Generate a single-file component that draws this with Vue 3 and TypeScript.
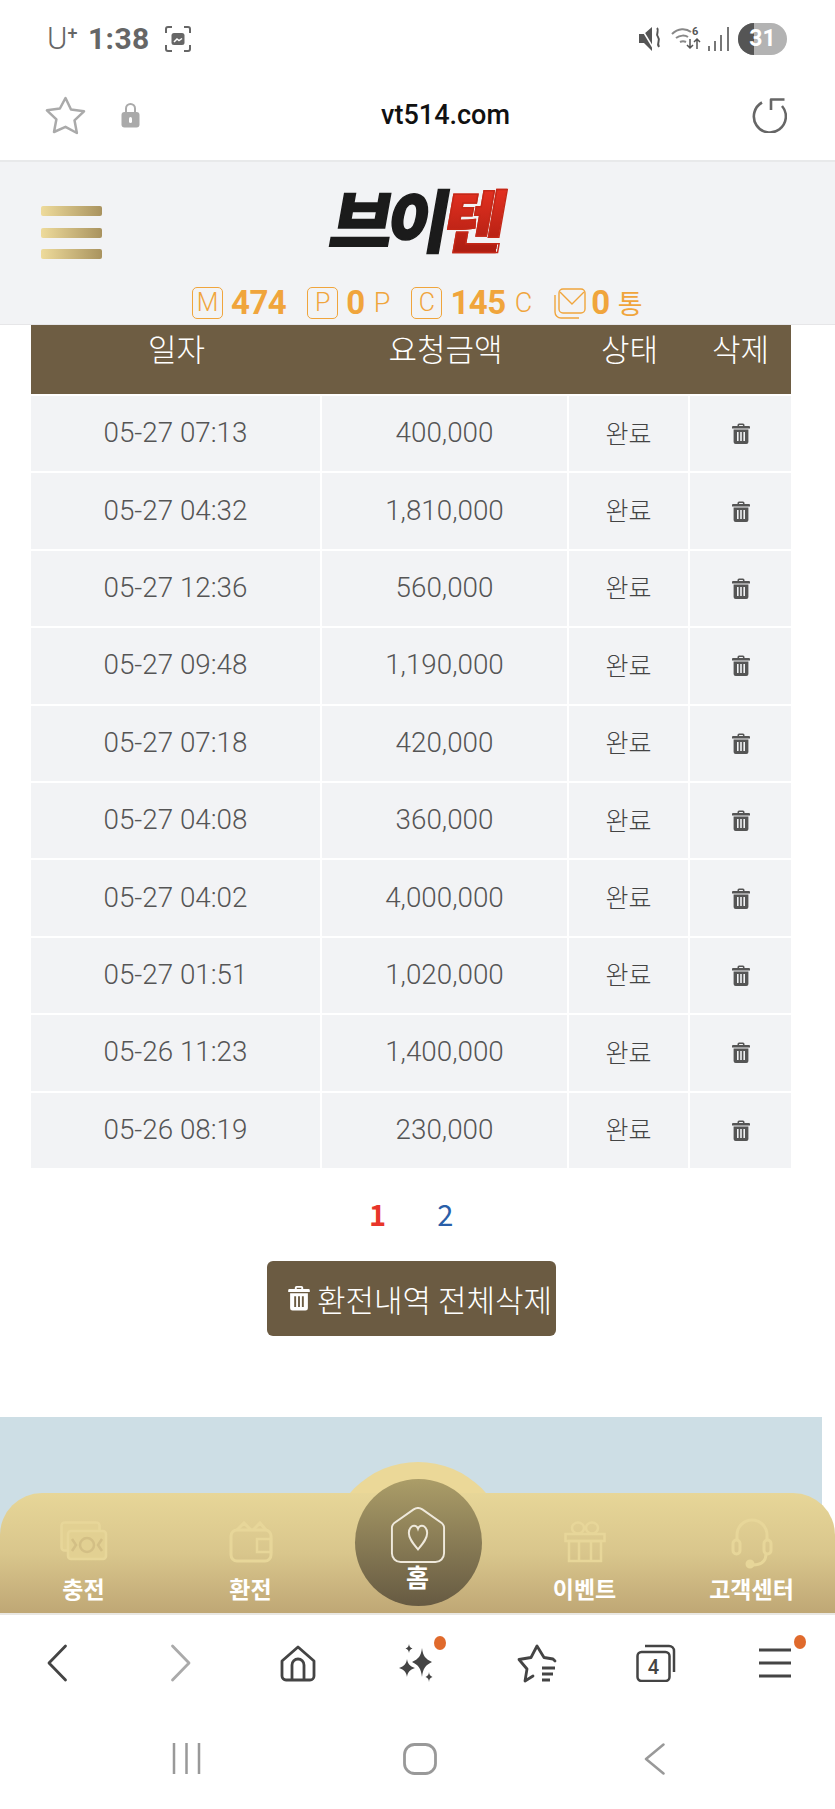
<script setup lang="ts">
const rows: [string, string][] = [
  ['05-27 07:13', '400,000'],
  ['05-27 04:32', '1,810,000'],
  ['05-27 12:36', '560,000'],
  ['05-27 09:48', '1,190,000'],
  ['05-27 07:18', '420,000'],
  ['05-27 04:08', '360,000'],
  ['05-27 04:02', '4,000,000'],
  ['05-27 01:51', '1,020,000'],
  ['05-26 11:23', '1,400,000'],
  ['05-26 08:19', '230,000'],
]
const trash = 'M8 1.5h4a1.5 1.5 0 0 1 1.5 1.5v1H18a1 1 0 0 1 1 1v1.4H1V5a1 1 0 0 1 1-1h4.5V3A1.5 1.5 0 0 1 8 1.5zM8.1 3v1h3.8V3zM2.6 7.6h14.8V20a2 2 0 0 1-2 2H4.6a2 2 0 0 1-2-2zM6 10v9h1.6v-9zm3.2 0v9h1.6v-9zm3.2 0v9H14v-9z'
</script>

<template>
  <div class="page">
    <div class="status">
      <div class="status-left">
        <span class="carrier">U<sup>+</sup></span>
        <span class="clock">1:38</span>
        <svg class="shot" width="28" height="28" viewBox="0 0 28 28" fill="none" stroke="#666" stroke-width="2">
          <path d="M2 8V4a2 2 0 0 1 2-2h4M20 2h4a2 2 0 0 1 2 2v4M26 20v4a2 2 0 0 1-2 2h-4M8 26H4a2 2 0 0 1-2-2v-4" />
          <rect x="7.5" y="8" width="13" height="12" rx="2.5" fill="#666" stroke="none" />
          <path d="M10 17l3-3 2 1.500 3-2" stroke="#fff" stroke-width="1.500" />
        </svg>
      </div>
      <div class="status-right">
        <svg class="mute" width="26" height="28" viewBox="0 0 26 28">
          <path d="M1 9h5l8-7v24l-8-8H1z" fill="#555" />
          <path d="M2 1l15 25" stroke="#fff" stroke-width="1.500" />
          <path d="M19 3c3 3-2 5 1 9s-2 5 1 10" fill="none" stroke="#555" stroke-width="2" />
        </svg>
        <svg width="30" height="28" viewBox="0 0 30 28" fill="none" stroke="#888" stroke-width="2">
          <path d="M1 9c6-6 14-6 19-2M5 13c4-3 9-3 12-1M9 17c2-1 4-1 6 0" />
          <text x="21" y="10" class="wifi-six">6</text>
          <path d="M19 14v9m-3-3l3 3 3-3M26 24v-10m-3 3l3-3 3 3" stroke="#555" stroke-width="1.500" />
        </svg>
        <svg width="24" height="26" viewBox="0 0 24 26" fill="#777">
          <rect x="1" y="20" width="2" height="5" />
          <rect x="7" y="15" width="2" height="10" />
          <rect x="13" y="9" width="2" height="16" />
          <rect x="20" y="1" width="2" height="24" />
        </svg>
        <div class="battery"><span class="battery-fill"></span><span class="battery-num">31</span></div>
      </div>
    </div>

    <div class="urlbar">
      <div class="url-left">
        <svg width="41" height="39" viewBox="0 0 41 39" fill="none" stroke="#aaa" stroke-width="2.500" stroke-linejoin="round">
          <path d="M20.500 2l5.500 11.500 13 1.800-9.500 9 2.400 12.700-11.400-6.200L9 36l2.400-12.700-9.500-9 13-1.800z" />
        </svg>
        <svg width="19" height="26" viewBox="0 0 19 26" fill="#aaa">
          <path d="M5 11V6.500a4.500 4.500 0 0 1 9 0V11" fill="none" stroke="#aaa" stroke-width="2" />
          <rect x="0.500" y="10" width="18" height="15.500" rx="3" />
          <rect x="8" y="15" width="3" height="6" rx="1.500" fill="#fff" />
        </svg>
      </div>
      <div class="url">vt514.com</div>
      <svg class="reload" width="36" height="36" viewBox="0 0 36 36" fill="none" stroke="#666" stroke-width="2.600">
        <path d="M11 5.500A16 16 0 1 0 31 9" />
        <path d="M20 13V2.500h13.500" stroke-linejoin="round" stroke-width="2.600" />
      </svg>
    </div>

    <header class="site-header">
      <div class="burger"><i></i><i></i><i></i></div>
      <div class="logo"><span class="logo-black">브이</span><span class="logo-red">텐</span></div>
      <div class="wallet">
        <span class="tag">M</span><b class="w-474">474</b>
        <span class="tag tag-p">P</span><b>0</b><span class="unit">P</span>
        <span class="tag tag-c">C</span><b>145</b><span class="unit">C</span>
        <svg class="mail" width="33" height="31" viewBox="0 0 33 31" fill="none" stroke="#f0a53c" stroke-width="1.400">
          <rect x="6" y="1" width="26" height="24" rx="4" />
          <path d="M7 4l12 12L31 4" />
          <path d="M2 7v17a6 6 0 0 0 6 6h18" />
        </svg>
        <b>0</b><span class="unit unit-kr">통</span>
      </div>
    </header>

    <main class="main">
      <section class="table">
        <div class="thead">
          <span>일자</span><span>요청금액</span><span>상태</span><span>삭제</span>
        </div>
        <div v-for="row in rows" :key="row[0]" class="trow">
          <span class="cell">{{ row[0] }}</span>
          <span class="cell">{{ row[1] }}</span>
          <span class="cell cell-kr">완료</span>
          <span class="cell cell-icon">
            <svg width="20" height="23" viewBox="0 0 20 23" fill="#555"><path fill-rule="evenodd" :d="trash" /></svg>
          </span>
        </div>
      </section>

      <nav class="pager"><span class="p-on">1</span><span class="p-off">2</span></nav>

      <button class="clear" type="button">
        <svg width="24" height="28" viewBox="0 0 20 23" fill="#fff"><path fill-rule="evenodd" :d="trash" /></svg>
        <span>환전내역 전체삭제</span>
      </button>

      <div class="banner"></div>

      <div class="goldnav">
        <div class="bump"></div>
        <div class="panel"></div>
        <div class="circle"></div>
        <div class="nav-items">
          <a class="nav-item">
            <svg width="48" height="40" viewBox="0 0 48 40" fill="none" stroke="#e7d699" stroke-width="2.500">
              <rect x="1.500" y="1.500" width="38" height="28" rx="3" fill="#e2d092" />
              <rect x="8" y="10" width="38" height="28" rx="3" fill="#e2d092" />
              <circle cx="27" cy="24" r="7" stroke="#d3bf85" />
              <path d="M12 18l4 6-4 6M42 18l-4 6 4 6" stroke="#d3bf85" />
            </svg>
            <span>충전</span>
          </a>
          <a class="nav-item">
            <svg width="44" height="42" viewBox="0 0 44 42" fill="none" stroke="#e7d699" stroke-width="3">
              <rect x="2" y="9" width="40" height="31" rx="6" />
              <path d="M8 9l7-7 7 7M24 9l7-7 6 7" />
              <rect x="28" y="18" width="14" height="13" stroke-width="2.500" />
            </svg>
            <span>환전</span>
          </a>
          <a class="nav-item nav-home">
            <svg width="58" height="56" viewBox="0 0 58 58" fill="none" stroke="#efe9dc" stroke-width="2">
              <path d="M2 21c0-2 1-3 2.500-4.500L24.500 2.500c3-2 6-2 9 0l20 14c1.500 1.500 2.500 2.500 2.500 4.500v27a9 9 0 0 1-9 9H11a9 9 0 0 1-9-9z" />
              <path d="M29 44c-5-6-9.500-11-9.500-17 0-5 3-7.500 5.500-7.500 2 0 3.300 1 4 3 .7-2 2-3 4-3 2.500 0 5.500 2.500 5.500 7.500 0 6-4.500 11-9.500 17z" />
            </svg>
            <span>홈</span>
          </a>
          <a class="nav-item">
            <svg width="42" height="42" viewBox="0 0 42 42" fill="none" stroke="#e7d699" stroke-width="2.500">
              <ellipse cx="14" cy="7" rx="6" ry="5.500" />
              <ellipse cx="28" cy="7" rx="6" ry="5.500" />
              <rect x="1.500" y="13" width="39" height="7" />
              <rect x="5" y="20" width="32" height="20" />
              <path d="M15 20v20M27 20v20" />
            </svg>
            <span>이벤트</span>
          </a>
          <a class="nav-item">
            <svg width="42" height="52" viewBox="0 0 42 52" fill="none" stroke="#e7d699" stroke-width="3">
              <path d="M6 24v-6a15 15 0 0 1 30 0v6" />
              <rect x="2" y="23" width="7" height="14" rx="3.500" />
              <rect x="33" y="23" width="7" height="14" rx="3.500" />
              <path d="M35 37c0 8-6 11-13 11" />
              <circle cx="19" cy="47" r="3" fill="#e7d699" />
            </svg>
            <span>고객센터</span>
          </a>
        </div>
      </div>
    </main>

    <div class="toolbar">
      <svg class="nudge-back" width="22" height="38" viewBox="0 0 22 38" fill="none" stroke="#444" stroke-width="2.800" stroke-linecap="round" stroke-linejoin="round"><path d="M19.500 2L3 19l16.500 17" /></svg>
      <svg class="nudge-fwd" width="22" height="38" viewBox="0 0 22 38" fill="none" stroke="#aaa" stroke-width="2.800" stroke-linecap="round" stroke-linejoin="round"><path d="M2.500 2L19 19 2.500 36" /></svg>
      <svg width="36" height="37" viewBox="0 0 36 37" fill="none" stroke="#444" stroke-width="2.800" stroke-linejoin="round"><path d="M2 16L18 2l16 14v15a4 4 0 0 1-4 4H6a4 4 0 0 1-4-4z" /><path d="M12 35V20a6 6 0 0 1 12 0v15" /></svg>
      <div class="tool-dot">
        <svg width="36" height="38" viewBox="0 0 36 38" fill="#444">
          <path d="M23 4c1 8 3.500 11 10 14-6.500 3-9 6.500-10 15-1-8.500-3.500-12-10-15 6.500-3 9-6 10-14z" />
          <path d="M8 15c.6 4.500 2.500 7 8 9-5.500 2-7.400 4.500-8 9-.6-4.500-2.500-7-8-9 5.500-2 7.400-4.500 8-9z" />
          <path d="M10 0c.3 2.500 1 3.500 3.500 4.500C11 5.500 10.300 6.500 10 9c-.3-2.500-1-3.500-3.500-4.500C9 3.500 9.700 2.500 10 0z" />
          <path d="M30 28c.3 2.500 1 3.500 3.500 5-2.500 1-3.200 2-3.500 5-.3-3-1-4-3.500-5 2.500-1.500 3.200-2.500 3.500-5z" />
        </svg>
        <i class="dot dot-a"></i>
      </div>
      <svg width="40" height="39" viewBox="0 0 40 39" fill="none" stroke="#444" stroke-width="2.800" stroke-linejoin="round" stroke-linecap="round">
        <path d="M38 17l-2-2-9-1.500L20 2l-6 11.500L2 15.500 10 25l-2 12 8-5" />
        <path d="M25 24h13M25 30h11M25 36h8" stroke-width="3" stroke-linecap="butt" />
      </svg>
      <svg width="40" height="38" viewBox="0 0 40 38" fill="none" stroke="#444" stroke-width="2.500">
        <rect x="1.500" y="8" width="32" height="29" rx="4" />
        <path d="M9 2h24a5 5 0 0 1 5 5v21" />
        <text x="17.500" y="30" class="tab-num">4</text>
      </svg>
      <div class="tool-dot">
        <svg width="32" height="32" viewBox="0 0 32 32" stroke="#444" stroke-width="3"><path d="M0 3h32M0 16h32M0 29h32" /></svg>
        <i class="dot dot-b"></i>
      </div>
    </div>

    <div class="sysnav">
      <svg width="29" height="31" viewBox="0 0 29 31" stroke="#999" stroke-width="2.500"><path d="M2 0v31M14.500 0v31M27 0v31" /></svg>
      <svg width="34" height="32" viewBox="0 0 34 32" fill="none" stroke="#999" stroke-width="2.800"><rect x="1.500" y="1.500" width="31" height="29" rx="10" /></svg>
      <svg width="21" height="32" viewBox="0 0 21 32" fill="none" stroke="#999" stroke-width="2.500" stroke-linecap="round" stroke-linejoin="round"><path d="M19.500 1.500L2 16l17.500 14.500" /></svg>
    </div>
  </div>
</template>

<style>
html, body { margin: 0; background: #fff; }
</style>

<style scoped>
.page {
  width: 835px;
  height: 1809px;
  display: flex;
  flex-direction: column;
  overflow: hidden;
  background: #fff;
  font-family: "Noto Sans CJK KR", "Noto Sans", sans-serif;
  color: #555;
}
.status {
  height: 77px;
  flex: none;
  display: flex;
  align-items: center;
  justify-content: space-between;
  padding: 0 47px 0 47px;
  box-sizing: border-box;
}
.status-left, .status-right { display: flex; align-items: center; }
.carrier {
  font: 300 31px Roboto, sans-serif;
  color: #666;
  width: 41px;
  line-height: 36px;
}
.carrier sup { font-size: 18px; line-height: 0; font-weight: 500; vertical-align: 10px; }
.clock { font: 700 30px Roboto, sans-serif; color: #666; letter-spacing: .4px; }
.shot { margin-left: 14px; }
.status-right { gap: 6px; margin-right: 1px; }
.mute { margin-right: 1px; }
.wifi-six { font: 700 11px Roboto, sans-serif; fill: #555; stroke: none; }
.battery {
  position: relative;
  width: 49px;
  height: 32px;
  border-radius: 16px;
  background: #b3b3b3;
  overflow: hidden;
  margin-left: 1px;
}
.battery-fill { position: absolute; left: 0; top: 0; bottom: 0; width: 16px; background: #555; }
.battery-num {
  position: absolute;
  inset: 0;
  display: flex;
  align-items: center;
  justify-content: center;
  font: 700 23px/1 Roboto, sans-serif;
  color: #fff;
}
.urlbar {
  height: 83px;
  flex: none;
  display: flex;
  align-items: center;
  box-sizing: border-box;
  padding: 0 48px 7px 45px;
}
.url-left { display: flex; align-items: center; gap: 35px; width: 95px; }
.url { flex: 1; text-align: center; font: 500 27px Roboto, sans-serif; color: #111; }
.reload { flex: none; }
.site-header {
  height: 165px;
  flex: none;
  box-sizing: border-box;
  position: relative;
  background: #f2f3f5;
  border-top: 2px solid #e8e9ea;
  border-bottom: 1px solid #e6e6e8;
  display: flex;
  flex-direction: column;
  align-items: center;
}
.burger {
  position: absolute;
  left: 41px;
  top: 44px;
  width: 61px;
  display: flex;
  flex-direction: column;
  gap: 11.500px;
}
.burger i {
  height: 10px;
  border-radius: 2px;
  background: linear-gradient(90deg, #eedb9b, #a9935f);
}
.logo {
  margin-top: 17px;
  height: 78px;
  display: flex;
  font-size: 68px;
  line-height: 78px;
  font-weight: 900;
  letter-spacing: -6px;
  transform: skewX(-10deg);
  margin-left: -2px;
}
.logo-black { color: #1b1b1b; -webkit-text-stroke: 1.500px #1b1b1b; }
.logo-red {
  background: linear-gradient(180deg, #ec3323, #a81c10);
  -webkit-background-clip: text;
  background-clip: text;
  color: transparent;
  -webkit-text-stroke: 1.500px #c42818;
}
.wallet {
  position: absolute;
  top: 125px;
  left: 192px;
  display: flex;
  align-items: center;
  height: 32px;
  color: #f0a53c;
}
.wallet b { font: 700 33px/32px Roboto, sans-serif; margin-left: 8px; letter-spacing: -.5px; }
.wallet .w-474 { margin-right: 21px; }
.tag {
  box-sizing: border-box;
  width: 31px;
  height: 32px;
  border: 1.500px solid #f0a53c;
  border-radius: 5px;
  font: 300 25px/29px Roboto, sans-serif;
  text-align: center;
}
.unit { font: 300 27px/32px Roboto, sans-serif; margin-left: 9px; margin-right: 21px; }
.unit-kr { font: 400 27px/32px "Noto Sans CJK KR", sans-serif; margin: 0 0 0 8px; }
.mail { margin-right: -3px; }
.main {
  flex: 1;
  position: relative;
  min-height: 0;
  overflow: hidden;
  display: flex;
  flex-direction: column;
  align-items: flex-start;
}
.table { width: 760px; margin: 0 0 0 31px; flex: none; }
.thead, .trow {
  display: grid;
  grid-template-columns: 291px 247px 121px 101px;
}
.thead {
  height: 69px;
  background: #6e5d43;
  color: #fff;
  font-size: 31px;
  line-height: 46px;
  font-weight: 300;
  text-align: center;
  box-sizing: border-box;
}
.trow { height: 77.400px; box-sizing: border-box; padding-top: 2px; }
.cell {
  display: flex;
  align-items: center;
  justify-content: center;
  box-sizing: border-box;
  background: #f2f3f5;
  font: 300 27.800px Roboto, sans-serif;
  color: #555;
  margin-right: 2px;
  padding-bottom: 2px;
}
.cell-icon { margin-right: 0; padding-bottom: 0; }
.cell-kr { font: 300 25px "Noto Sans CJK KR", sans-serif; color: #444; padding-bottom: 4px; }
.pager {
  width: 760px;
  margin: 21px 0 0 0;
  display: flex;
  height: 48px;
  align-items: center;
  padding-left: 369px;
  gap: 51px;
  font-size: 29px;
  line-height: 48px;
  box-sizing: border-box;
}
.p-on { color: #e8352a; font-weight: 700; }
.p-off { color: #2a5ea8; font-weight: 400; }
.clear {
  margin: 24px 0 0 267px;
  width: 289px;
  height: 75px;
  flex: none;
  border: 0;
  border-radius: 6px;
  background: #6b5b42;
  color: #fff;
  display: flex;
  align-items: center;
  justify-content: center;
  gap: 6px;
  padding: 0 0 0 16px;
  box-sizing: border-box;
  font-family: inherit;
  font-size: 31px;
  font-weight: 300;
  white-space: nowrap;
}
.banner {
  margin-top: 81px;
  width: 822px;
  flex: 1;
  background: #cddee5;
}
.goldnav {
  position: absolute;
  left: 0;
  right: 0;
  bottom: 0;
  height: 151px;
}
.bump {
  position: absolute;
  left: 328px;
  top: 0;
  width: 180px;
  height: 180px;
  background: #ebd898;
  border-radius: 50%;
  clip-path: inset(0 0 140px 0);
}
.panel {
  position: absolute;
  left: 0;
  right: 0;
  top: 31px;
  bottom: 0;
  border-radius: 42px 42px 0 0;
  background: linear-gradient(180deg, #e7d698, #d9c68c 50%, #bfa775);
}
.circle {
  position: absolute;
  left: 355px;
  top: 17px;
  width: 127px;
  height: 127px;
  border-radius: 50%;
  background: linear-gradient(180deg, #ab9d68, #665a42);
}
.nav-items {
  position: absolute;
  left: 0;
  right: 0;
  top: 31px;
  bottom: 0;
  display: grid;
  grid-template-columns: repeat(5, 1fr);
}
.nav-item {
  position: relative;
  display: flex;
  flex-direction: column;
  align-items: center;
  justify-content: flex-end;
  color: #fff;
  font-size: 23px;
  font-weight: 700;
  line-height: 30px;
  padding-bottom: 10px;
}
.nav-item svg { position: absolute; top: 28px; left: 50%; transform: translateX(-50%); }
.nav-item:last-child svg { top: 24px; }
.nav-home { padding-bottom: 22px; font-size: 25px; }
.nav-home svg { top: 14px; }
.toolbar {
  height: 112px;
  flex: none;
  border-top: 2px solid #e9e7e2;
  box-sizing: border-box;
  display: grid;
  grid-template-columns: repeat(7, 1fr);
  align-items: center;
  justify-items: center;
  padding-bottom: 14px;
}
.nudge-back { margin-left: -6px; }
.nudge-fwd { margin-left: 4px; }
.tool-dot { position: relative; display: flex; }
.dot { position: absolute; width: 12px; height: 14px; border-radius: 50%; background: #e06a2c; }
.dot-a { left: 35px; top: -8px; }
.dot-b { left: 35px; top: -12px; }
.tab-num { font: 500 20px Roboto, sans-serif; fill: #444; stroke: none; text-anchor: middle; }
.sysnav {
  height: 84px;
  flex: none;
  display: grid;
  grid-template-columns: repeat(3, 234px);
  justify-content: center;
  justify-items: center;
  align-items: start;
  padding: 18px 0 0 5px;
  box-sizing: border-box;
}
</style>
